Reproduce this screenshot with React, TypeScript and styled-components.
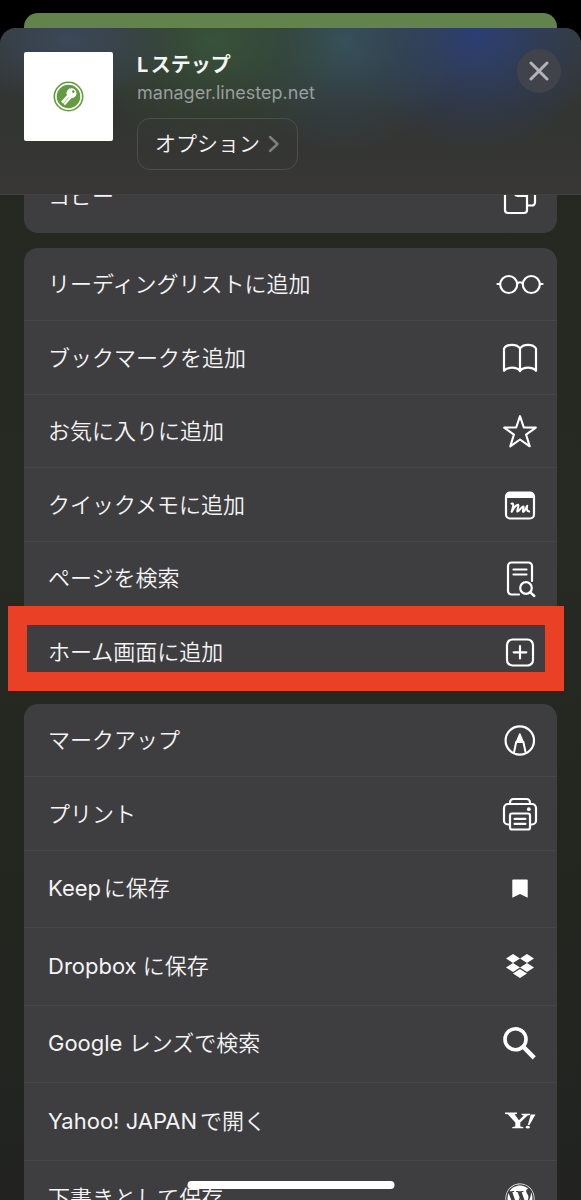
import React from "react";
import styled, { createGlobalStyle } from "styled-components";
import { FaDropbox, FaWordpress } from "react-icons/fa";

const GlobalStyle = createGlobalStyle`
  * { box-sizing: border-box; }
  html, body, #root { height: 100%; }
  body {
    margin: 0;
    background: #000;
    color: #f4f4f5;
    font-family: Inter, "Noto Sans CJK JP", sans-serif;
    text-autospace: normal;
    overflow: hidden;
  }
  button { font: inherit; color: inherit; }
`;

const Screen = styled.div`
  height: 100%;
  display: flex;
  flex-direction: column;
  overflow: hidden;
`;

const PageBehind = styled.div`
  flex: none;
  height: 32px;
  margin: 13px 24px -17px;
  border-radius: 14px 14px 0 0;
  background: #63834c;
`;

const Sheet = styled.section`
  flex: 1;
  min-height: 0;
  display: flex;
  flex-direction: column;
  border-radius: 16px 16px 0 0;
  overflow: hidden;
  background: linear-gradient(#242821, #262a22 45%, #22261f 75%, #222321);
`;

const Header = styled.header`
  position: relative;
  z-index: 1;
  flex: none;
  display: flex;
  align-items: flex-start;
  gap: 24px;
  padding: 24px 20px 24px 24px;
  border-bottom: 1px solid #424242;
  background:
    radial-gradient(ellipse 110px 60px at 12% 8%, #3c4859, #3c485900),
    radial-gradient(ellipse 140px 110px at 37% 8%, #38533a, #36502f60 50%, #36502f00),
    radial-gradient(ellipse 120px 110px at 59% 8%, #36505c, #34505f60 50%, #34505f00),
    radial-gradient(ellipse 130px 115px at 82% 4%, #2c3f74, #2c3f7470 50%, #2c3f7400),
    linear-gradient(#343b3b, #323532 50%, #383736);
`;

const Thumbnail = styled.div`
  display: grid;
  place-items: center;
  width: 89px;
  height: 89px;
  border-radius: 2px;
  background: #fff;
`;

const SiteInfo = styled.div`
  flex: 1;
  min-width: 0;
  display: flex;
  flex-direction: column;
  align-items: flex-start;
`;

const Title = styled.h1`
  margin: 0;
  font-size: 20px;
  line-height: 26px;
  font-weight: 700;
`;

const Domain = styled.p`
  margin: 2px 0 13px;
  font-size: 18px;
  line-height: 25px;
  color: #999d9d;
`;

const OptionsButton = styled.button`
  display: flex;
  align-items: center;
  gap: 8px;
  height: 52px;
  padding: 0 17px;
  border: 1px solid #4b4e4a;
  border-radius: 13px;
  background: transparent;
  font-size: 21px;
  font-weight: 350;
  line-height: 28px;
`;

const CloseButton = styled.button`
  flex: none;
  display: grid;
  place-items: center;
  width: 44px;
  height: 44px;
  margin-top: -3px;
  padding: 0;
  border: 0;
  border-radius: 50%;
  background: #40434a;
  color: #b2b4ba;
`;

const ActionList = styled.main`
  flex: 1;
  min-height: 0;
  display: flex;
  flex-direction: column;
  gap: 15px;
  padding: 0 24px;
  overflow: hidden;
`;

const Group = styled.div<{ $scrolled?: boolean }>`
  flex: none;
  display: flex;
  flex-direction: column;
  margin-top: ${(p) => (p.$scrolled ? "-35px" : "0")};
  border-radius: 14px;
  background: #3e3e40;
`;

const Row = styled.button<{ $app?: boolean }>`
  position: relative;
  display: flex;
  align-items: center;
  justify-content: space-between;
  height: ${(p) => (p.$app ? 77 : 73)}px;
  padding: 0 13px ${(p) => (p.$app ? 2 : 0)}px 24px;
  border: 0;
  border-bottom: 1px solid #464648;
  background: none;
  text-align: left;
  font-size: 22px;
  font-weight: 350;
  line-height: 32px;

  &:nth-child(even) { height: ${(p) => (p.$app ? 78 : 74)}px; }
  &:last-child { border-bottom-color: transparent; }
`;

const Brand = styled.span`
  font-weight: 400;
`;

const IconSlot = styled.span`
  flex: none;
  display: grid;
  place-items: center;
  width: 48px;
  height: 40px;
  color: #fff;
`;

const Highlight = styled.span`
  position: absolute;
  inset: -9px -7px -3px -16px;
  border: 19px solid #ea4126;
  pointer-events: none;
`;

const HomeIndicator = styled.div`
  position: fixed;
  left: 50%;
  bottom: 11px;
  width: 207px;
  height: 8px;
  transform: translateX(-50%);
  border-radius: 4px;
  background: #fff;
`;

const Line = ({ children, width = 2.2 }: { children: React.ReactNode; width?: number }) => (
  <svg width="48" height="40" viewBox="0 0 48 40" fill="none" stroke="currentColor"
    strokeWidth={width} strokeLinecap="round" strokeLinejoin="round" aria-hidden="true">
    {children}
  </svg>
);

const CopyIcon = () => (
  <Line>
    <rect x="9" y="12" width="22" height="25" rx="3" />
    <path d="M19 11V8a3 3 0 0 1 3-3h9l8 8v13.500a3 3 0 0 1-3 3h-4" />
    <path d="M19 13v4a3 3 0 0 0 3 3h9" />
  </Line>
);
const GlassesIcon = () => (
  <Line>
    <circle cx="12.700" cy="20.500" r="8.500" />
    <circle cx="35.300" cy="20.500" r="8.500" />
    <path d="M21.200 19.500c1.600-1.600 4-1.600 5.600 0M1.500 20h2.500M44 20h2.500" />
  </Line>
);
const BookIcon = () => (
  <Line>
    <path d="M24 10.500c-1.500-2.500-4.500-3.700-8-3.700s-6.500 1.200-8 3.700v22.200c1.800-2 4.800-3 8-3s6.300 1 8 3.300c1.700-2.300 4.800-3.300 8-3.300s6.200 1 8 3V10.500c-1.500-2.500-4.500-3.700-8-3.700s-6.500 1.200-8 3.700zV33" />
  </Line>
);
const StarIcon = () => (
  <Line width={2.1}>
    <path d="M24 5.200l3.800 11.300 12 .1-9.700 7 3.600 11.700L24 28.500l-9.700 6.800 3.600-11.700-9.700-7 12-.1z" />
  </Line>
);
const MemoIcon = () => (
  <Line>
    <rect x="10" y="7.500" width="28" height="26" rx="4" />
    <path d="M10 13v-1.500a4 4 0 0 1 4-4h20a4 4 0 0 1 4 4V13z" fill="currentColor" stroke="none" />
    <path d="M10.500 12h27" />
    <path strokeWidth="2" d="M15.500 18.600c1.600-.8 2 .8 1.500 3l-1.300 5.200c2-3.800 5-7.600 6.400-7.100 1.500.6-1.700 5.700-.7 6.900 1.200.8 4.200-5.300 5.900-5.200 1.300.4-1.500 5-.1 5.500 1.500.1 2.300-3.400 4-6-.6 2.600-.8 5.200 2 5.600" />
  </Line>
);
const FindIcon = () => (
  <Line>
    <path d="M23 36.500h-7.500a3.500 3.500 0 0 1-3.500-3.500V8a3.500 3.500 0 0 1 3.500-3.500h17A3.500 3.500 0 0 1 36 8v15" />
    <path d="M17.500 11.500h13M17.500 16.500h13" />
    <circle cx="30" cy="30" r="5.800" />
    <path d="M34.300 34.300L38.300 38" strokeWidth="2.400" />
  </Line>
);
const PlusSquareIcon = () => (
  <Line>
    <rect x="11" y="7.500" width="26" height="26" rx="5.500" />
    <path d="M24 14v12.500M17.700 20.300h12.600" />
  </Line>
);
const MarkupIcon = () => (
  <Line>
    <circle cx="23.800" cy="20.500" r="14.200" />
    <path strokeWidth="2" d="M18 32.500l2.200-10.500h7.200l2.200 10.500" />
    <path strokeWidth="1.600" d="M23.800 14l-3.300 8h6.600z" fill="currentColor" />
  </Line>
);
const PrinterIcon = () => (
  <Line>
    <path d="M14 10V8.500A3.500 3.500 0 0 1 17.500 5h13A3.500 3.500 0 0 1 34 8.500V10" />
    <path d="M13.500 30.500H12a4 4 0 0 1-4-4V14a4 4 0 0 1 4-4h24a4 4 0 0 1 4 4v12.500a4 4 0 0 1-4 4h-1.500" />
    <rect x="14" y="19.500" width="20" height="16" rx="2" />
    <path d="M18.500 24.800h11M18.500 29.800h11" />
    <circle cx="32.800" cy="15.200" r="1.900" fill="currentColor" stroke="none" />
  </Line>
);
const BookmarkIcon = () => (
  <svg width="16" height="19" viewBox="0 0 16 19" fill="currentColor" aria-hidden="true">
    <path d="M1.500 .5h13A1 1 0 0 1 15.700 1.500v17.200L8 15l-7.700 3.700V1.500A1 1 0 0 1 1.500 .5z" />
  </svg>
);
const LensIcon = () => (
  <svg width="48" height="40" viewBox="0 0 48 40" fill="none" stroke="currentColor" aria-hidden="true">
    <circle cx="19.500" cy="16.200" r="10.500" strokeWidth="3.600" />
    <path d="M27.500 24L38.200 34.900" strokeWidth="4.400" />
  </svg>
);
const YahooIcon = () => (
  <svg width="48" height="40" viewBox="0 0 48 40" fill="currentColor" aria-hidden="true">
    <path d="M9 11.500h12v1.400l-2.400.4 4.300 5.900 5-4.600-2.300-.5v-1.300h8.500v1.300l-2.500.4-7.300 7v4l3 .4v1.400H16.300v-1.400l3-.4v-4l-7.500-8.200L9 12.900z" />
    <path d="M34.800 13.500h4.700L33.500 24h-1.700z" />
    <ellipse cx="31.800" cy="26.200" rx="2" ry="1.400" />
  </svg>
);
const KeyLogo = () => (
  <svg width="32" height="32" viewBox="0 0 32 32" role="img" aria-label="Lステップ">
    <circle cx="15.500" cy="15.500" r="15" fill="#639c3f" />
    <circle cx="15.500" cy="15.500" r="12.600" fill="none" stroke="#fff" strokeWidth="1.600" />
    <circle cx="18.500" cy="12.300" r="5" fill="#fff" />
    <circle cx="20.300" cy="10.600" r="1.300" fill="#639c3f" />
    <path d="M16 14L9 21.500" stroke="#fff" strokeWidth="2.600" />
    <path d="M18 16L11.200 23.500" stroke="#fff" strokeWidth="2.200" />
  </svg>
);

type Action = {
  brand?: string;
  label: string;
  icon: React.ReactNode;
  app?: boolean;
  highlighted?: boolean;
};

const pageActions: Action[] = [
  { label: "リーディングリストに追加", icon: <GlassesIcon /> },
  { label: "ブックマークを追加", icon: <BookIcon /> },
  { label: "お気に入りに追加", icon: <StarIcon /> },
  { label: "クイックメモに追加", icon: <MemoIcon /> },
  { label: "ページを検索", icon: <FindIcon /> },
  { label: "ホーム画面に追加", icon: <PlusSquareIcon />, highlighted: true },
];

const appActions: Action[] = [
  { label: "マークアップ", icon: <MarkupIcon /> },
  { label: "プリント", icon: <PrinterIcon /> },
  { brand: "Keep", label: "に保存", icon: <BookmarkIcon />, app: true },
  { brand: "Dropbox", label: " に保存", icon: <FaDropbox size={28} />, app: true },
  { brand: "Google", label: " レンズで検索", icon: <LensIcon />, app: true },
  { brand: "Yahoo! JAPAN", label: "で開く", icon: <YahooIcon />, app: true },
  { label: "下書きとして保存", icon: <FaWordpress size={30} />, app: true },
];

const ActionGroup = ({ actions, scrolled }: { actions: Action[]; scrolled?: boolean }) => (
  <Group $scrolled={scrolled}>
    {actions.map((a) => (
      <Row key={(a.brand ?? "") + a.label} type="button" $app={a.app}>
        <span>{a.brand && <Brand>{a.brand}</Brand>}{a.label}</span>
        <IconSlot>{a.icon}</IconSlot>
        {a.highlighted && <Highlight />}
      </Row>
    ))}
  </Group>
);

export default function App() {
  return (
    <>
      <GlobalStyle />
      <Screen>
        <PageBehind />
        <Sheet>
          <Header>
            <Thumbnail><KeyLogo /></Thumbnail>
            <SiteInfo>
              <Title>Lステップ</Title>
              <Domain>manager.linestep.net</Domain>
              <OptionsButton type="button">
                オプション
                <svg width="12" height="18" viewBox="0 0 12 18" fill="none" stroke="#7d807d"
                  strokeWidth="2.400" strokeLinecap="round" strokeLinejoin="round" aria-hidden="true">
                  <path d="M2 2l7.500 7L2 16" />
                </svg>
              </OptionsButton>
            </SiteInfo>
            <CloseButton type="button" aria-label="閉じる">
              <svg width="20" height="20" viewBox="0 0 20 20" stroke="currentColor"
                strokeWidth="3" strokeLinecap="round" aria-hidden="true">
                <path d="M2 2l16 16M18 2L2 18" />
              </svg>
            </CloseButton>
          </Header>
          <ActionList>
            <ActionGroup scrolled actions={[{ label: "コピー", icon: <CopyIcon /> }]} />
            <ActionGroup actions={pageActions} />
            <ActionGroup actions={appActions} />
          </ActionList>
        </Sheet>
        <HomeIndicator />
      </Screen>
    </>
  );
}
